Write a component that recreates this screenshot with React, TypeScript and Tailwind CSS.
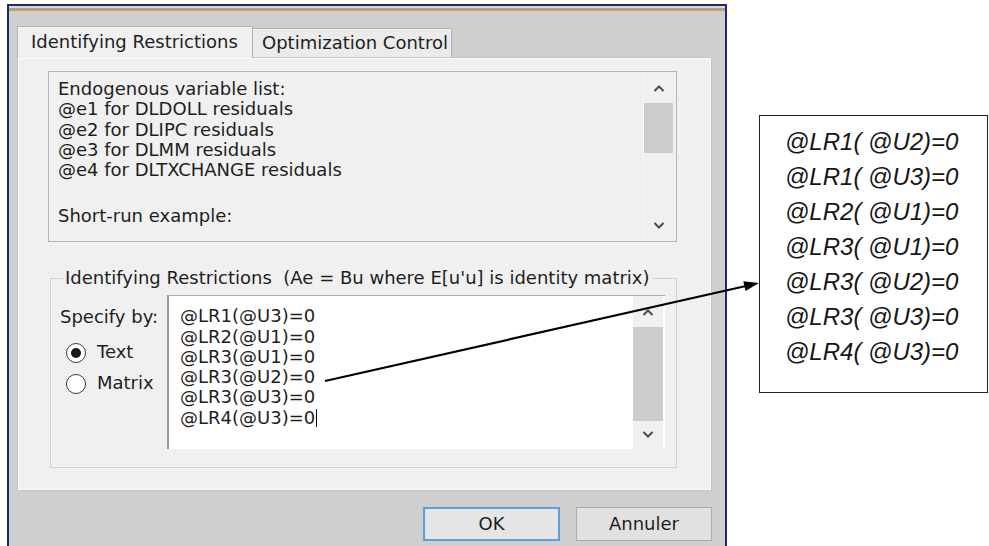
import React from 'react';

const endogenous = [
  'Endogenous variable list:',
  '@e1 for DLDOLL residuals',
  '@e2 for DLIPC residuals',
  '@e3 for DLMM residuals',
  '@e4 for DLTXCHANGE residuals',
];

const restrictions = [
  '@LR1(@U3)=0',
  '@LR2(@U1)=0',
  '@LR3(@U1)=0',
  '@LR3(@U2)=0',
  '@LR3(@U3)=0',
  '@LR4(@U3)=0',
];

const fullSet = [
  '@LR1( @U2)=0',
  '@LR1( @U3)=0',
  '@LR2( @U1)=0',
  '@LR3( @U1)=0',
  '@LR3( @U2)=0',
  '@LR3( @U3)=0',
  '@LR4( @U3)=0',
];

function Chevron({ up }: { up?: boolean }) {
  return (
    <svg width="12" height="8" viewBox="0 0 12 8" className="block">
      <polyline
        points={up ? '1.5,7 6,2.5 10.5,7' : '1.5,1 6,5.5 10.5,1'}
        fill="none"
        stroke="#4a4a4a"
        strokeWidth="2"
      />
    </svg>
  );
}

function Radio({ label, checked }: { label: string; checked?: boolean }) {
  return (
    <div className="flex h-[20px] items-center">
      <span className="ml-[6px] flex h-[20px] w-[20px] items-center justify-center rounded-full border border-[#3a3a3a] bg-white">
        {checked && <span className="h-[10px] w-[10px] rounded-full bg-[#1a1a1a]" />}
      </span>
      <span className="ml-[11px]">{label}</span>
    </div>
  );
}

export default function App() {
  return (
    <div className="relative h-[546px] w-[989px] overflow-hidden bg-white font-['DejaVu_Sans',sans-serif] text-[18px] leading-[20.3px] text-[#1e1e1e]">
      <div className="flex items-start">
        {/* Dialog window */}
        <div className="ml-[7px] mt-[4px] h-[542px] w-[720px] border-x-2 border-t-2 border-[#1b2a6b] bg-[#cfcfcf]">
          <div className="h-[2px] bg-[#d9d9d9]" />
          <div className="h-[3px] bg-[#c39c72]" />

          <div className="pl-[8px] pt-[15px]">
            {/* Tabs */}
            <div className="flex h-[31px] items-end">
              <div className="relative z-10 -mb-px flex h-[32px] w-[236px] items-center border-x border-t border-[#b4b4b4] bg-[#f0f0f0] pl-[13px]">
                Identifying Restrictions
              </div>
              <div className="flex h-[29px] w-[199px] items-center border-r border-t border-[#b4b4b4] bg-[#ebebeb] pl-[9px]">
                Optimization Control
              </div>
            </div>

            {/* Tab page */}
            <div className="h-[434px] w-[695px] border border-[#c4c4c4] bg-[#f0f0f0] pl-[30px] pt-[13px] shadow-[inset_0_0_0_1px_#fbfbfb]">
              {/* Read-only info box */}
              <div className="flex h-[171px] w-[629px] overflow-hidden border border-[#b6b6b6] bg-[#f0f0f0]">
                <div className="flex-1 pl-[9px] pt-[7px]">
                  {endogenous.map((l) => (
                    <div key={l} className="whitespace-pre">{l}</div>
                  ))}
                  <div className="h-[26px]" />
                  <div>Short-run example:</div>
                </div>
                <div className="mr-[3px] flex w-[30px] flex-col border-l border-[#f7f7f7]">
                  <div className="flex h-[31px] items-center justify-center"><Chevron up /></div>
                  <div className="h-[50px] bg-[#cdcdcd]" />
                  <div className="flex-1" />
                  <div className="flex h-[31px] items-center justify-center"><Chevron /></div>
                </div>
              </div>

              {/* Restrictions group */}
              <fieldset className="ml-[2px] mt-[26px] h-[200px] w-[627px] border border-[#d2d2d2] pl-[9px] pt-[7px]">
                <legend className="ml-[3px] whitespace-pre px-[2px]">
                  Identifying Restrictions  (Ae = Bu where E[u'u] is identity matrix)
                </legend>
                <div className="flex">
                  <div className="w-[107px] pt-[12px]">
                    <div>Specify by:</div>
                    <div className="mt-[15px]"><Radio label="Text" checked /></div>
                    <div className="mt-[11px]"><Radio label="Matrix" /></div>
                  </div>
                  <div className="flex h-[154px] w-[498px] border-l-2 border-t border-l-[#9a9a9a] border-t-[#ababab] bg-white">
                    <div className="flex-1 pl-[11px] pt-[10px]">
                      {restrictions.map((l, i) => (
                        <div key={l} className="flex items-center">
                          {l}
                          {i === restrictions.length - 1 && (
                            <span className="ml-px inline-block h-[18px] w-px bg-black" />
                          )}
                        </div>
                      ))}
                    </div>
                    <div className="mr-[2px] flex w-[30px] flex-col bg-[#f0f0f0]">
                      <div className="flex h-[31px] items-center justify-center"><Chevron up /></div>
                      <div className="flex-1 bg-[#cdcdcd]" />
                      <div className="flex h-[28px] items-center justify-center"><Chevron /></div>
                    </div>
                  </div>
                </div>
              </fieldset>
            </div>

            {/* Buttons */}
            <div className="mt-[16px] flex w-[695px] justify-end gap-[16px]">
              <button className="h-[34px] w-[137px] border-2 border-[#5d9fd8] bg-[#e5e5e5]">OK</button>
              <button className="h-[34px] w-[136px] border border-[#adadad] bg-[#e1e1e1]">Annuler</button>
            </div>
          </div>
        </div>

        {/* Expanded restriction list */}
        <div className="ml-[32px] mt-[115px] h-[278px] w-[229px] border border-[#222] pl-[25px] pt-[8px] font-['Liberation_Sans',Arial,sans-serif] text-[24px] italic leading-[35px] text-[#161616]">
          {fullSet.map((l) => (
            <div key={l} className="whitespace-pre">{l}</div>
          ))}
        </div>
      </div>

      {/* Pointer arrow */}
      <svg className="pointer-events-none absolute inset-0" width="989" height="546">
        <line x1="325" y1="381" x2="746" y2="286" stroke="#000" strokeWidth="2.2" />
        <polygon points="759,283 745.5,291 743.3,281.2" fill="#000" />
      </svg>
    </div>
  );
}
